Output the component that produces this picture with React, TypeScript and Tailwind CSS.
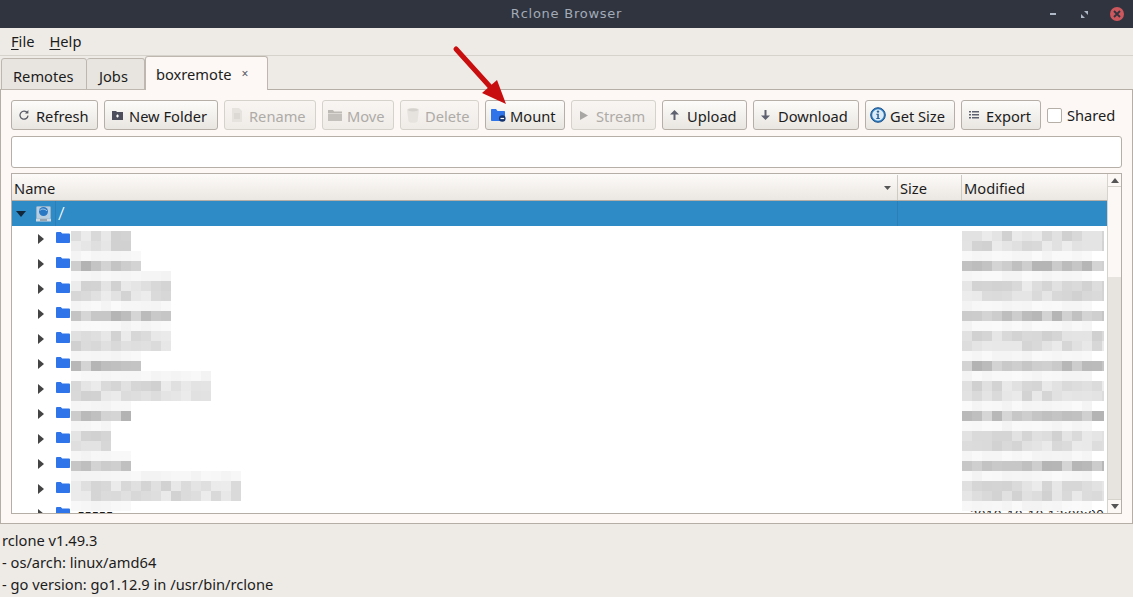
import React from 'react';

const nameWidths = [60, 70, 100, 100, 100, 70, 140, 60, 40, 60, 170, 60];

// the blur in the screenshot repeats every five 10px strips
const stripKinds = ['mid', 'mid', 'light', 'dark', 'light'];

function shade(kind: string, x: number, y: number) {
  const n = Math.abs(Math.sin(x * 12.9898 + y * 78.233) * 43758.5453) % 1;
  let v = 0;
  if (kind === 'mid') v = 208 + n * 28;
  else if (kind === 'dark') v = 178 + n * 36;
  else v = 243 + n * 7;
  const g = Math.round(v);
  return `rgb(${g},${g},${g})`;
}

function BlurStrip({ kind, y, width, seed }: { kind: string; y: number; width: number; seed: number }) {
  const cells = [];
  for (let i = 0; i < width / 10; i++) {
    cells.push(<div key={i} className="h-[10px] w-[10px] shrink-0" style={{ backgroundColor: shade(kind, i + seed, y) }} />);
  }
  return <div className="flex h-[10px]">{cells}</div>;
}

function BlurColumn({ left, modified }: { left: string; modified?: boolean }) {
  const strips = [];
  for (let k = 0; k < 28; k++) {
    const y = 231 + k * 10;
    const row = Math.min(11, Math.round((y + 5 - 238) / 25));
    const kind = k === 27 ? 'light' : stripKinds[k % 5];
    const modWidth = kind === 'light' ? 130 : 150;
    strips.push(<BlurStrip key={k} kind={kind} y={y} width={modified ? modWidth : nameWidths[row]} seed={modified ? 40 : 0} />);
  }
  return <div className={`absolute top-[57px] overflow-hidden ${modified ? 'w-[142px]' : ''} ${left}`}>{strips}</div>;
}

const FolderIcon = ({ className = '' }: { className?: string }) => (
  <svg width="14" height="11" viewBox="0 0 14 12" preserveAspectRatio="none" className={`shrink-0 ${className}`}>
    <path d="M0 1.2C0 .5.5 0 1.2 0h3.6l1.4 1.6h6.6c.7 0 1.2.5 1.2 1.2v8c0 .7-.5 1.2-1.2 1.2H1.2C.5 12 0 11.5 0 10.8z" fill="#2f74e9" />
  </svg>
);

const RowArrow = () => (
  <svg width="6" height="10" viewBox="0 0 6 10" className="shrink-0">
    <path d="M0 0l6 5-6 5z" fill="#444" />
  </svg>
);

function RefreshIcon() {
  return (
    <svg width="10" height="10" viewBox="0 0 10 10" fill="none">
      <path d="M8.4 3A4 4 0 1 0 9 5.6" stroke="#5a5d68" strokeWidth="1.3" />
      <path d="M6 3.4h3.4V0z" fill="#5a5d68" />
    </svg>
  );
}

function NewFolderIcon() {
  return (
    <svg width="11" height="10" viewBox="0 0 11 10">
      <path d="M0 1h4l1 1h6v8H0z" fill="#4d505c" />
      <path d="M4 6h3M5.5 4.5v3" stroke="#fff" strokeWidth="1.2" />
    </svg>
  );
}

function RenameIcon() {
  return (
    <svg width="10" height="14" viewBox="0 0 10 14">
      <path d="M0 0h7l3 3v11H0z" fill="#e6e3de" />
      <path d="M2 6h6M2 8h6M2 10h6" stroke="#d2cfca" />
    </svg>
  );
}

function MoveIcon() {
  return (
    <svg width="14" height="11" viewBox="0 0 14 11">
      <path d="M0 0h5l1 1.500h8V3H0z" fill="#bdb9b4" />
      <path d="M0 3.500h14V11H0z" fill="#c4c0bb" />
    </svg>
  );
}

function TrashIcon() {
  return (
    <svg width="12" height="15" viewBox="0 0 12 15">
      <path d="M0 1.500C2-.5 10-.5 12 1.500L10.500 13.500C9 15.300 3 15.300 1.500 13.500z" fill="#e6e3de" />
      <ellipse cx="6" cy="2" rx="5" ry="1.400" fill="#d5d2cd" />
    </svg>
  );
}

function MountIcon() {
  return (
    <svg width="15" height="13" viewBox="0 0 15 13">
      <path d="M0 1c0-.6.4-1 1-1h4l1.500 2H13c.6 0 1 .4 1 1v8c0 .6-.4 1-1 1H1c-.6 0-1-.4-1-1z" fill="#2f74e9" />
      <circle cx="11.300" cy="9.500" r="3.300" fill="#14346f" />
      <path d="M9.500 9.500h3.600" stroke="#fff" strokeWidth="1.200" />
    </svg>
  );
}

function PlayIcon() {
  return (
    <svg width="8" height="9" viewBox="0 0 8 9">
      <path d="M0 0l8 4.500-8 4.500z" fill="#a9a7a4" />
    </svg>
  );
}

function UpIcon() {
  return (
    <svg width="9" height="10" viewBox="0 0 9 10">
      <path d="M4.500 0L9 4.500H5.500V10h-2V4.500H0z" fill="#5e6270" />
    </svg>
  );
}

function DownIcon() {
  return (
    <svg width="9" height="10" viewBox="0 0 9 10">
      <path d="M4.500 10L9 5.500H5.500V0h-2v5.500H0z" fill="#5e6270" />
    </svg>
  );
}

function InfoIcon() {
  return (
    <svg width="16" height="16" viewBox="0 0 16 16">
      <circle cx="8" cy="8" r="7.300" fill="#2f7fc4" stroke="#1d4f86" strokeWidth="1" />
      <circle cx="8" cy="8" r="5.800" fill="#dcebf6" />
      <circle cx="8" cy="4.600" r="1.200" fill="#2a5f96" />
      <path d="M6.300 6.800h2.500v4.300h1v1H6.300v-1h1V7.800h-1z" fill="#2a5f96" />
    </svg>
  );
}

function ListIcon() {
  return (
    <svg width="10" height="8" viewBox="0 0 10 8">
      <path d="M0 0h2v1.500H0zM3 0h7v1.500H3zM0 3h2v1.500H0zM3 3h7v1.500H3zM0 6h2v1.500H0zM3 6h7v1.500H3z" fill="#5e6270" />
    </svg>
  );
}

const buttons = [
  { label: 'Refresh', width: 'w-[87px]', pad: 'pl-[7px]', gap: 'gap-[7px]', icon: <RefreshIcon /> },
  { label: 'New Folder', width: 'w-[114px]', pad: 'pl-[7px]', gap: 'gap-[6px]', icon: <NewFolderIcon /> },
  { label: 'Rename', width: 'w-[92px]', pad: 'pl-[7px]', gap: 'gap-[7px]', icon: <RenameIcon />, disabled: true },
  { label: 'Move', width: 'w-[72px]', pad: 'pl-[5px]', gap: 'gap-[5px]', icon: <MoveIcon />, disabled: true },
  { label: 'Delete', width: 'w-[79px]', pad: 'pl-[6px]', gap: 'gap-[6px]', icon: <TrashIcon />, disabled: true },
  { label: 'Mount', width: 'w-[80px]', pad: 'pl-[5px]', gap: 'gap-[4px]', icon: <MountIcon /> },
  { label: 'Stream', width: 'w-[85px]', pad: 'pl-[8px]', gap: 'gap-[8px]', icon: <PlayIcon />, disabled: true },
  { label: 'Upload', width: 'w-[85px]', pad: 'pl-[7px]', gap: 'gap-[8px]', icon: <UpIcon /> },
  { label: 'Download', width: 'w-[106px]', pad: 'pl-[7px]', gap: 'gap-[8px]', icon: <DownIcon /> },
  { label: 'Get Size', width: 'w-[90px]', pad: 'pl-[4px]', gap: 'gap-[4px]', icon: <InfoIcon /> },
  { label: 'Export', width: 'w-[80px]', pad: 'pl-[7px]', gap: 'gap-[7px]', icon: <ListIcon /> },
];

export default function App() {
  return (
    <div className="relative flex h-screen w-full flex-col overflow-hidden bg-[#eeebe6] font-['Noto_Sans',sans-serif] text-[14.67px] text-[#1c1c1c]">
      {/* Title bar */}
      <div className="relative flex h-[28px] shrink-0 items-center justify-center bg-[#2f343f] font-['DejaVu_Sans',sans-serif] text-[13px] tracking-[0.75px] text-[#a3abb8]">
        Rclone Browser
        <div className="absolute left-[1050px] top-[13px] h-[2px] w-[6px] bg-[#afb8c6]" />
        <svg width="7" height="7" viewBox="0 0 7 7" className="absolute left-[1081px] top-[11px]">
          <path d="M3 0h4v4zM0 3l4 4H0z" fill="#afb8c6" />
        </svg>
        <div className="absolute left-[1110px] top-[7px] flex h-[14px] w-[14px] items-center justify-center rounded-full bg-[#cc575d]">
          <svg width="8" height="8" viewBox="0 0 8 8">
            <path d="M1 1l6 6M7 1L1 7" stroke="#2f343f" strokeWidth="1.800" />
          </svg>
        </div>
      </div>

      {/* Menu */}
      <div className="flex h-[28px] shrink-0 items-center gap-[15px] border-b border-[#d6d2cc] pl-[11px] leading-none">
        <span><span className="underline underline-offset-2">F</span>ile</span>
        <span><span className="underline underline-offset-2">H</span>elp</span>
      </div>

      {/* Tabs */}
      <div className="relative z-10 flex h-[33px] shrink-0 items-end pl-px">
        <div className="mb-[-1px] flex h-[32px] w-[86px] items-center rounded-t-[3px] border border-[#bdb7b0] bg-[#e8e5e0] pl-[11px] pt-[3px]">Remotes</div>
        <div className="mb-[-1px] flex h-[32px] w-[58px] items-center rounded-t-[3px] border border-l-0 border-[#bdb7b0] bg-[#e8e5e0] pl-[12px] pt-[3px]">Jobs</div>
        <div className="mb-[-1px] flex h-[34px] w-[123px] items-center rounded-t-[3px] border border-b-0 border-[#bdb7b0] bg-[#fdf8f5] pl-[10px]">
          boxremote
          <span className="ml-[10px] text-[12px] leading-none text-[#555a66]">×</span>
        </div>
      </div>

      {/* Tab pane */}
      <div className="flex h-[435px] shrink-0 flex-col border border-[#b5aea7] bg-[#fdf8f5] px-[10px] pt-[10px]">
        <div className="flex h-[30px] items-center gap-[6px]">
          {buttons.map((b) => (
            <div
              key={b.label}
              className={`flex h-[30px] items-center rounded-[3px] border bg-gradient-to-b ${b.width} ${b.pad} ${b.gap} ${
                b.disabled
                  ? 'border-[#d5d1cb] from-[#f8f5f2] to-[#efece8] text-[#aeaba7]'
                  : 'border-[#b5afa8] from-[#fdfcfa] to-[#e9e6e1]'
              }`}
            >
              <span className="flex w-auto shrink-0 items-center justify-center">{b.icon}</span>
              <span className="pt-[2px]">{b.label}</span>
            </div>
          ))}
          <div className="h-[15px] w-[15px] shrink-0 rounded-[2px] border border-[#b5afa8] bg-white" />
          <span className="ml-[-1px]">Shared</span>
        </div>

        <div className="mt-[6px] h-[32px] shrink-0 rounded-[3px] border border-[#b5afa8] bg-white" />

        {/* Tree */}
        <div className="relative mt-[5px] flex h-[341px] shrink-0 overflow-hidden border border-[#b5aea7] bg-white">
          <div className="relative flex min-w-0 flex-1 flex-col overflow-hidden">
            <div className="flex h-[27px] shrink-0 items-center border-b border-[#b5aea7] bg-gradient-to-b from-[#fdfbf9] to-[#ebe7e2] pt-px">
              <div className="flex h-full w-[886px] items-center justify-between border-r border-[#cfcac4] pl-[2px] pr-[6px]">
                Name
                <svg width="7" height="4" viewBox="0 0 8 5" preserveAspectRatio="none"><path d="M0 0h8L4 5z" fill="#555" /></svg>
              </div>
              <div className="flex h-full w-[64px] items-center border-r border-[#cfcac4] pl-[2px]">Size</div>
              <div className="flex h-full flex-1 items-center pl-[2px]">Modified</div>
            </div>

            <div className="flex h-[25px] shrink-0 items-center bg-[#2e8bc6] text-white">
              <div className="flex h-full w-[886px] shrink-0 items-center border-r border-[#2b7fb6]">
                <svg width="10" height="6" viewBox="0 0 10 6" className="ml-[4px]"><path d="M0 0h10L5 6z" fill="#12283a" /></svg>
                <svg width="15" height="16" viewBox="0 0 15 16" className="ml-[10px]">
                  <rect x="0.500" y="0.500" width="14" height="12" rx="1" fill="#b8cfe2" stroke="#8fb0cb" />
                  <circle cx="7.500" cy="5.500" r="4.500" fill="#2a78c4" />
                  <path d="M4 4.500C5 2.500 9 2.500 11 5" stroke="#a8d0ee" strokeWidth="1" fill="none" />
                  <rect y="12.500" width="15" height="3" fill="#cdd8e0" />
                  <path d="M4 14h7" stroke="#5e7383" strokeWidth="1" />
                </svg>
                <div className="ml-[4px] flex h-full items-center border-l border-[#2b7fb6] pl-[2px] text-[19px] font-light leading-none">/</div>
              </div>
            </div>

            {nameWidths.map((_, i) => (
              <div key={i} className="flex h-[25px] shrink-0 items-center pl-[26px]">
                <RowArrow />
                <FolderIcon className="ml-[12px] mt-[-2px]" />
                {i === 11 && (
                  <>
                    <span className="ml-[8px] w-[886px] shrink-0 pt-[2px] text-[13px] tracking-[1px]">zzzzz</span>
                    <span className="ml-[6px] shrink-0 whitespace-nowrap pt-[2px] text-[13px] tracking-[0.6px]">2019-10-10 12:00:00</span>
                  </>
                )}
              </div>
            ))}

            <BlurColumn left="left-[59px]" />
            <BlurColumn left="left-[950px]" modified />
          </div>

          {/* Scrollbar */}
          <div className="flex w-[14px] shrink-0 flex-col border-l border-[#d6d2cc] bg-[#fbf8f5]">
            <div className="flex h-[13px] shrink-0 items-center justify-center border-b border-[#d6d2cc]">
              <svg width="8" height="5" viewBox="0 0 8 5"><path d="M0 5h8L4 0z" fill="#555" /></svg>
            </div>
            <div className="h-[90px] shrink-0" />
            <div className="flex-1 bg-[#e7e3de]" />
            <div className="flex h-[14px] shrink-0 items-center justify-center border-t border-[#d6d2cc]">
              <svg width="8" height="5" viewBox="0 0 8 5"><path d="M0 0h8L4 5z" fill="#555" /></svg>
            </div>
          </div>
        </div>
      </div>

      {/* Log output */}
      <div className="pl-[2px] pt-[5px] leading-[22px]">
        <div>rclone v1.49.3</div>
        <div>- os/arch: linux/amd64</div>
        <div>- go version: go1.12.9 in /usr/bin/rclone</div>
      </div>

      {/* Red annotation arrow */}
      <svg width="70" height="70" viewBox="0 0 70 70" className="absolute left-[445px] top-[40px] z-20">
        <path d="M11 9L48 50" stroke="#c80e0e" strokeWidth="5" strokeLinecap="round" />
        <path d="M61 64L37 53L52 40z" fill="#c80e0e" />
      </svg>
    </div>
  );
}
